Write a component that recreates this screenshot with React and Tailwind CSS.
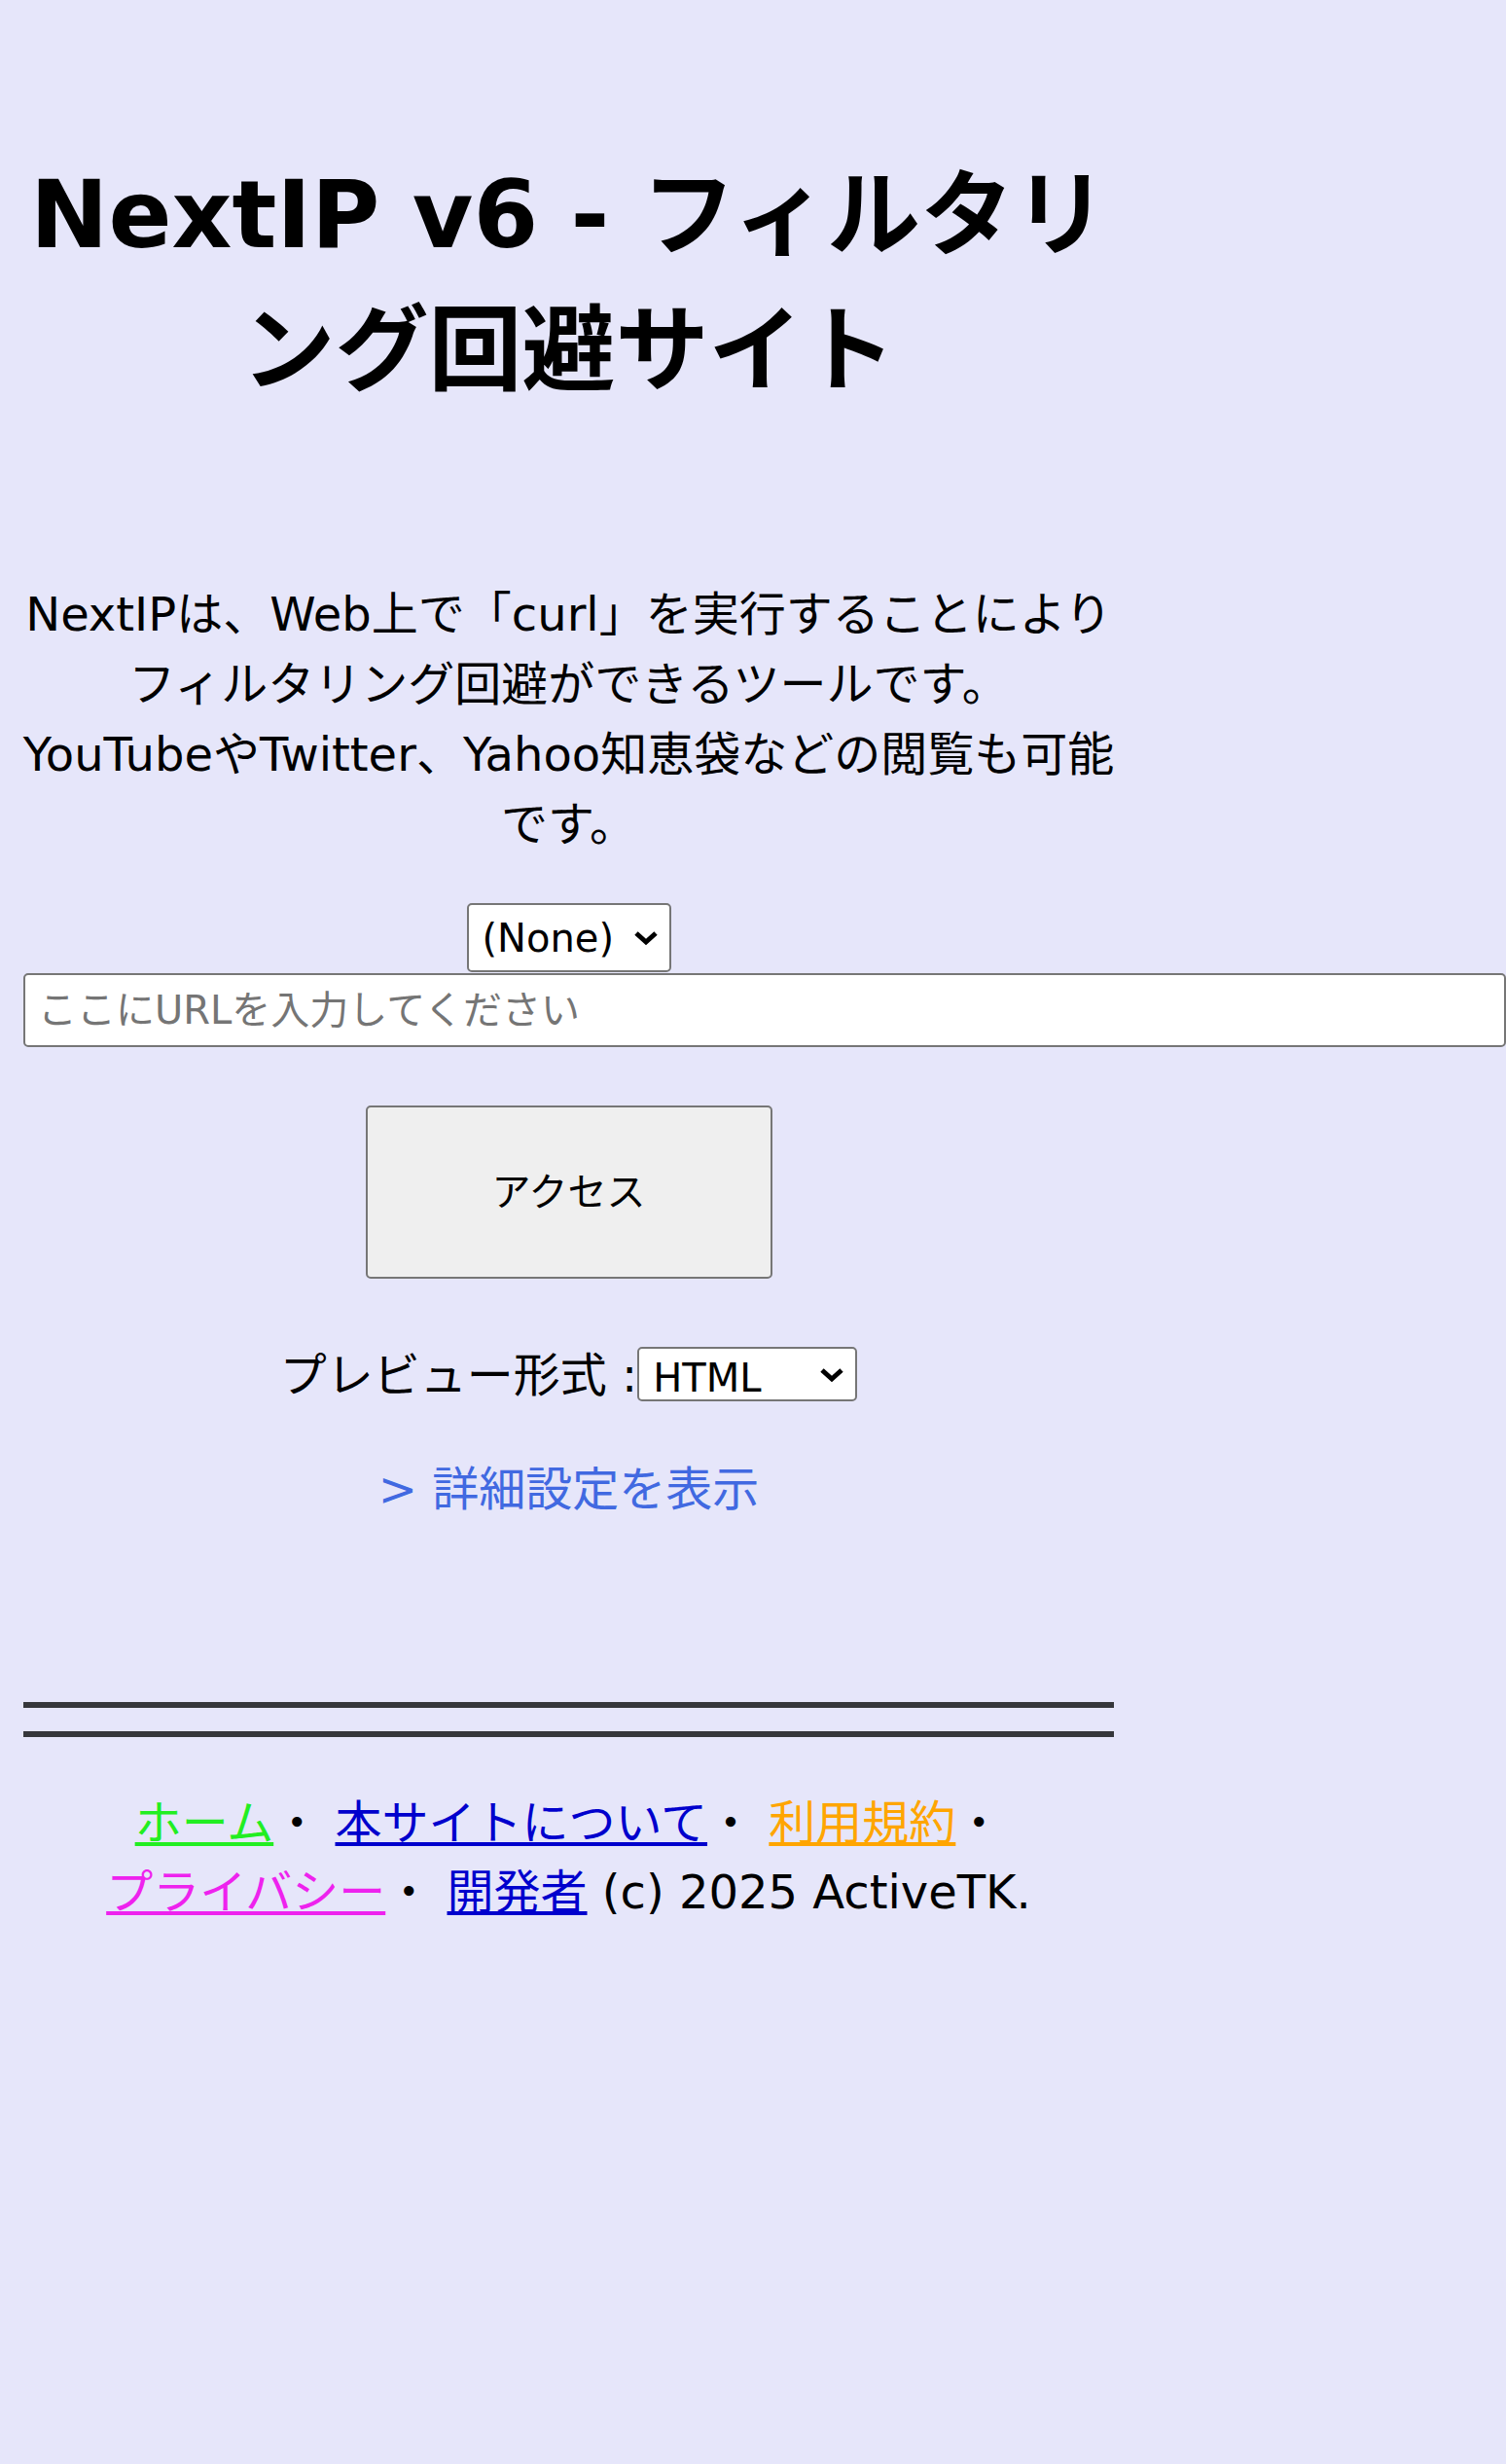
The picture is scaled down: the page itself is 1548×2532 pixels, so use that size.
import React from "react"

const Chevron = () => (
    <svg
        width="26"
        height="18"
        viewBox="0 0 26 18"
        className="absolute right-[13px] top-1/2 -translate-y-1/2 pointer-events-none"
    >
        <path d="M3 4 L13 13 L23 4" stroke="black" strokeWidth="5" fill="none" />
    </svg>
)

const App = () => {
    return (
        <div className="min-h-screen bg-[#e6e6fa] pt-[152px] pb-[200px] font-['DejaVu_Sans','Noto_Sans_CJK_JP',sans-serif] text-black">
            <div className="ml-[24px] w-[1121px] flex flex-col">
                {/* title */}
                <h1 className="text-center text-[96px] font-bold leading-[139px] whitespace-nowrap">
                    NextIP v6 - フィルタリ
                    <br />
                    ング回避サイト
                </h1>

                {/* description */}
                <p className="-mx-[20px] mt-[165px] text-center text-[48px] leading-[72px] whitespace-nowrap">
                    NextIPは、Web上で「curl」を実行することにより
                    <br />
                    フィルタリング回避ができるツールです。
                    <br />
                    YouTubeやTwitter、Yahoo知恵袋などの閲覧も可能
                    <br />
                    です。
                </p>

                {/* form */}
                <div className="relative self-center mt-[45px]">
                    <select
                        defaultValue="none"
                        className="appearance-none h-[71px] w-[210px] pl-[14px] pr-[50px] text-[40px] bg-white border-2 border-[#767676] rounded-[5px]"
                    >
                        <option value="none">(None)</option>
                    </select>
                    <Chevron />
                </div>
                <input
                    type="text"
                    placeholder="ここにURLを入力してください"
                    className="mt-[1px] h-[76px] w-[1524px] px-[13px] text-[40px] bg-white border-2 border-[#767676] rounded-[5px] placeholder:text-[#757575] outline-none"
                />
                <button className="self-center mt-[60px] h-[178px] w-[418px] text-[40px] bg-[#efefef] border-2 border-[#767676] rounded-[5px]">
                    アクセス
                </button>

                <div className="mt-[63px] h-[72px] flex items-center justify-center text-[48px]">
                    <span>プレビュー形式 :</span>
                    <div className="relative">
                        <select
                            defaultValue="html"
                            className="appearance-none h-[56px] w-[226px] pl-[14px] pr-[50px] text-[40px] bg-white border-2 border-[#767676] rounded-[5px]"
                        >
                            <option value="html">HTML</option>
                            <option value="text">テキスト</option>
                        </select>
                        <Chevron />
                    </div>
                </div>

                <div className="mt-[45px] text-center text-[48px] leading-[72px] text-[#4169e1] cursor-pointer">
                    &gt; 詳細設定を表示
                </div>

                {/* footer */}
                <div className="mt-[183px] h-[6px] bg-[#36373b]"></div>
                <div className="mt-[24px] h-[6px] bg-[#36373b]"></div>

                <div className="mt-[53px] text-center text-[48px] leading-[71px] whitespace-nowrap">
                    <a href="#" className="underline text-[#22ee22]">ホーム</a>・{" "}
                    <a href="#" className="underline text-[#0000cd]">本サイトについて</a>・{" "}
                    <a href="#" className="underline text-[#ffa500]">利用規約</a>・
                    <br />
                    <a href="#" className="underline text-[#ee22ee]">プライバシー</a>・{" "}
                    <a href="#" className="underline text-[#0000cd]">開発者</a> (c) 2025 ActiveTK.
                </div>
            </div>
        </div>
    )
}

export default App
